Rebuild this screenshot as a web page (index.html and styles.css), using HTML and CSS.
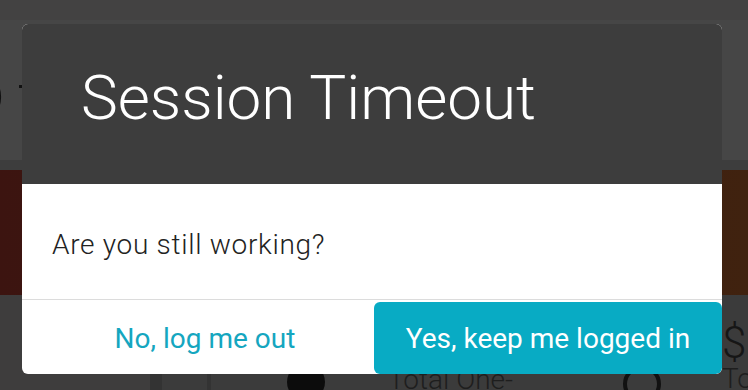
FILE: index.html
```html
<!DOCTYPE html>
<html lang="en">
<head>
  <meta charset="UTF-8" />
  <meta name="viewport" content="width=device-width, initial-scale=1.0"/>
  <title>Session Timeout</title>
  <link rel="stylesheet" href="styles.css">
</head>
<body>

  <div class="page">
    <div class="topbar"></div>
    <div class="hero">
      <span class="hero-title">o</span><span class="hero-dot"></span>
    </div>
    <div class="gap"></div>
    <div class="banner"></div>
    <div class="tiles">
      <div class="tile tile-side"></div>
      <div class="tile tile-strip"></div>
      <div class="tile tile-main">
        <span class="tile-icon"></span>
        <span class="tile-label">Total One-</span>
      </div>
      <div class="tile tile-ring">
        <span class="ring"></span>
      </div>
      <div class="tile tile-money">
        <span class="money">$</span>
        <span class="money-label">To</span>
      </div>
    </div>
  </div>

  <div class="modal">
    <div class="modal-header">
      <h1>Session Timeout</h1>
    </div>
    <div class="modal-body">
      <p>Are you still working?</p>
    </div>
    <div class="modal-footer">
      <button class="btn btn-link">No, log me out</button>
      <button class="btn btn-primary">Yes, keep me logged in</button>
    </div>
  </div>

</body>
</html>
```

FILE: styles.css
```css
body {
  margin: 0;
  padding: 0;
  font-family: Roboto, "Liberation Sans", sans-serif;
  background-color: #3a3a3a;
  overflow: hidden;
}

.page {
  width: 748px;
  height: 390px;
  display: flex;
  flex-direction: column;
  overflow: hidden;
}

.topbar {
  flex: 0 0 20px;
  background-color: #434242;
}

.hero {
  flex: 0 0 140px;
  background-color: #464646;
  display: flex;
  align-items: center;
  overflow: hidden;
}

.hero-title {
  font-size: 80px;
  color: #111;
  margin-left: -41px;
  line-height: 1;
  margin-top: 2px;
}

.hero-dot {
  width: 4px;
  height: 3px;
  background-color: #111;
  margin-left: 14px;
  margin-top: -8px;
}

.gap {
  flex: 0 0 10px;
  background-color: #3d3d3d;
}

.banner {
  flex: 0 0 125px;
  background: linear-gradient(90deg, #3c1410, #3d1c10 60%, #40220f);
}

.tiles {
  flex: 1;
  min-height: 0;
  display: flex;
  background-color: #3b3b3b;
  overflow: hidden;
}

.tile {
  flex-shrink: 0;
}

.tile-side {
  width: 150px;
  background-color: #3e3d3d;
}

.tile-strip {
  width: 12px;
  background-color: #333;
  margin-right: 45px;
}

.tile-main {
  width: 416px;
  display: flex;
  align-items: flex-start;
  padding-top: 64px;
  border-left: 4px solid #333;
  box-sizing: border-box;
}

.tile-icon {
  width: 38px;
  height: 38px;
  border-radius: 50%;
  background-color: #0c0c0c;
  margin: 4px 0 0 76px;
}

.tile-label {
  font-size: 28px;
  font-weight: 300;
  color: #1e1e1e;
  margin-left: 63px;
  line-height: 1;
  margin-top: 7px;
}

.tile-ring {
  width: 99px;
  padding-top: 70px;
  box-sizing: border-box;
}

.ring {
  display: block;
  width: 30px;
  height: 30px;
  border: 4px solid #111;
  border-radius: 50%;
}

.tile-money {
  flex: 1;
  flex-shrink: 1;
  display: flex;
  flex-direction: column;
  padding-top: 26px;
}

.money {
  font-size: 44px;
  font-weight: 300;
  color: #161616;
  line-height: 44px;
}

.money-label {
  font-size: 28px;
  font-weight: 300;
  color: #1e1e1e;
  line-height: 1;
}

.modal {
  position: absolute;
  left: 22px;
  top: 24px;
  width: 700px;
  height: 350px;
  background-color: white;
  border-radius: 6px;
  overflow: hidden;
  display: flex;
  flex-direction: column;
}

.modal-header {
  flex: 0 0 160px;
  background-color: #3d3d3d;
  display: flex;
  align-items: center;
  padding-left: 59px;
}

.modal-header h1 {
  margin: 0;
  font-size: 62px;
  font-weight: 300;
  color: white;
  margin-top: -14px;
}

.modal-body {
  flex: 0 0 115px;
  display: flex;
  align-items: center;
  padding-left: 30px;
  border-bottom: 1px solid #dcdcdc;
}

.modal-body p {
  margin: 0;
  font-size: 28px;
  font-weight: 300;
  letter-spacing: 0.7px;
  color: #222;
  margin-top: 6px;
}

.modal-footer {
  flex: 1;
  display: flex;
  padding-top: 2px;
}

.btn {
  font-family: Roboto, "Liberation Sans", sans-serif;
  font-size: 28px;
  border: none;
  cursor: pointer;
}

.btn-link {
  width: 352px;
  padding: 0 0 0 14px;
  background: none;
  color: #15a6bf;
}

.btn-primary {
  flex: 1;
  background-color: #08abc4;
  color: white;
  border-radius: 6px;
}
```
